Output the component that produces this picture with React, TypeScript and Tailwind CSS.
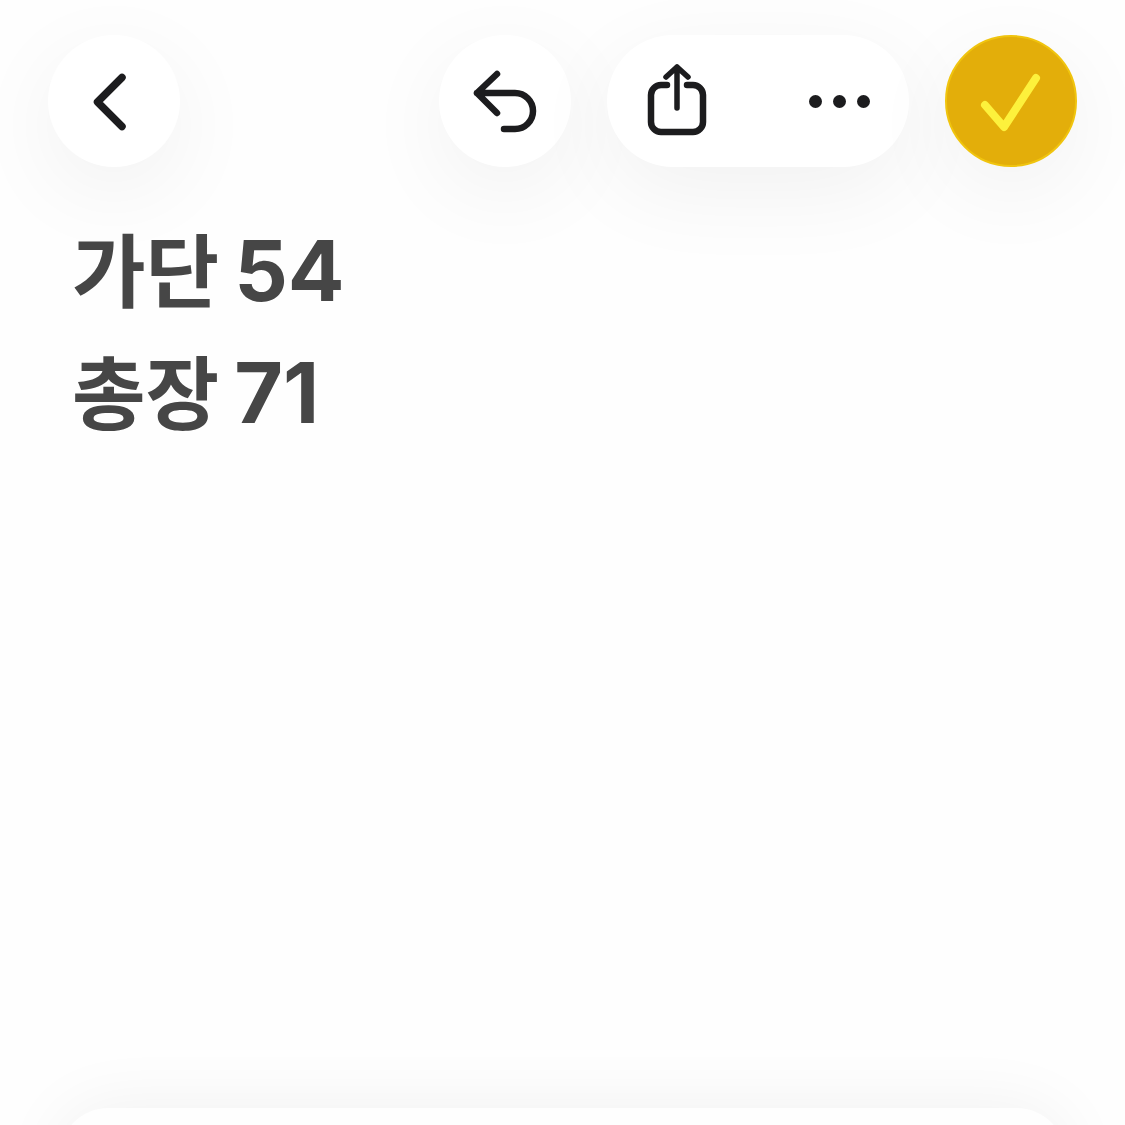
import React from 'react';

const ICON_STROKE = '#1c1c1e';

const softShadow = 'shadow-[0_24px_90px_rgba(0,0,0,0.055)]';

const BackIcon = () => (
  <svg className="shrink-0" width="132" height="132" viewBox="0 0 132 132" fill="none">
    <path d="M74 42.5 L49.5 67 L74 91.5" stroke={ICON_STROKE} strokeWidth="7.5" strokeLinecap="round" strokeLinejoin="round" />
  </svg>
);

const UndoIcon = () => (
  <svg className="shrink-0" width="132" height="132" viewBox="0 0 132 132" fill="none">
    <path
      d="M58 39 L38 58 L58 78 M38 58 H76 a18 18 0 0 1 0 36 H65"
      stroke={ICON_STROKE}
      strokeWidth="6.5"
      strokeLinecap="round"
      strokeLinejoin="round"
    />
  </svg>
);

const ShareIcon = () => (
  <svg className="shrink-0" width="70" height="80" viewBox="0 0 70 80" fill="none">
    <path
      d="M25 24 H19 a10 10 0 0 0 -10 10 V61 a10 10 0 0 0 10 10 H51 a10 10 0 0 0 10 -10 V34 a10 10 0 0 0 -10 -10 H45"
      stroke={ICON_STROKE}
      strokeWidth="6.5"
      strokeLinecap="round"
    />
    <path
      d="M35 6 V47 M24 16 L35 6 L46 16"
      stroke={ICON_STROKE}
      strokeWidth="5.5"
      strokeLinecap="round"
      strokeLinejoin="round"
    />
  </svg>
);

const MoreIcon = () => (
  <div className="flex items-center gap-[11px]">
    <div className="h-[13px] w-[13px] rounded-full bg-[#1c1c1e]"></div>
    <div className="h-[13px] w-[13px] rounded-full bg-[#1c1c1e]"></div>
    <div className="h-[13px] w-[13px] rounded-full bg-[#1c1c1e]"></div>
  </div>
);

const CheckIcon = () => (
  <svg className="shrink-0" width="132" height="132" viewBox="0 0 132 132" fill="none">
    <path d="M40 70 L59 92 L91 43" stroke="#fdf13c" strokeWidth="8" strokeLinecap="round" strokeLinejoin="round" />
  </svg>
);

const App: React.FC = () => {
  return (
    <div className="flex h-[1125px] w-[1125px] flex-col overflow-hidden bg-[#fefefe] font-['Inter','Noto_Sans_CJK_KR',sans-serif]">
      {/* Top toolbar */}
      <div className="flex items-center justify-between pl-12 pr-12 pt-[35px]">
        <button className={`flex h-[132px] w-[132px] items-center justify-center rounded-full bg-white ${softShadow}`}>
          <BackIcon />
        </button>

        <div className="flex items-center gap-9">
          <button className={`flex h-[132px] w-[132px] items-center justify-center rounded-full bg-white ${softShadow}`}>
            <UndoIcon />
          </button>

          <div className={`flex h-[132px] w-[302px] items-center justify-between rounded-full bg-white pl-[35px] pr-[39px] ${softShadow}`}>
            <ShareIcon />
            <MoreIcon />
          </div>

          <button className={`flex h-[132px] w-[132px] items-center justify-center rounded-full border-2 border-[#f0c40e] bg-[#e3ae0a] ${softShadow}`}>
            <CheckIcon />
          </button>
        </div>
      </div>

      {/* Note body */}
      <div className="pl-[72px] pt-[43px] text-[80px] font-bold leading-[121px] text-[#464646] [word-spacing:-4px]">
        <p>가단 <span className="text-[84px]">54</span></p>
        <p>총장 <span className="text-[84px]">71</span></p>
      </div>

      {/* Bottom sheet edge, runs off the page */}
      <div className="mx-[60px] mb-[-103px] mt-auto h-[120px] shrink-0 rounded-t-[48px] bg-[#fefefe] shadow-[0_0_70px_rgba(0,0,0,0.06)]"></div>
    </div>
  );
};

export default App;
